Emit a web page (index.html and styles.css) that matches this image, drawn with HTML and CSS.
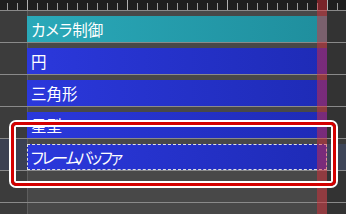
FILE: index.html
```html
<!DOCTYPE html>
<html lang="ja">
<head>
    <meta charset="UTF-8">
    <title>Timeline</title>
    <link rel="stylesheet" href="styles.css">
</head>
<body>
    <div class="timeline">
        <div class="ruler"></div>

        <div class="track">
            <div class="track-head"></div>
            <div class="track-lane"><div class="clip clip-camera">カメラ制御</div></div>
            <div class="track-tail"></div>
        </div>
        <div class="track">
            <div class="track-head"></div>
            <div class="track-lane"><div class="clip clip-object">円</div></div>
            <div class="track-tail"></div>
        </div>
        <div class="track">
            <div class="track-head"></div>
            <div class="track-lane"><div class="clip clip-object">三角形</div></div>
            <div class="track-tail"></div>
        </div>
        <div class="track">
            <div class="track-head"></div>
            <div class="track-lane"><div class="clip clip-object">星型</div></div>
            <div class="track-tail"></div>
        </div>
        <div class="track selected">
            <div class="track-head"></div>
            <div class="track-lane"><div class="clip clip-object clip-active">フレームバッファ</div></div>
            <div class="track-tail"></div>
        </div>
        <div class="track">
            <div class="track-head"></div>
            <div class="track-lane"></div>
            <div class="track-tail"></div>
        </div>
        <div class="track">
            <div class="track-head"></div>
            <div class="track-lane"></div>
            <div class="track-tail"></div>
        </div>

        <!-- overlays -->
        <div class="playhead"></div>
        <div class="selection-frame"></div>
    </div>
</body>
</html>
```

FILE: styles.css
```css
body { margin: 0; background: #3c3c3c; font-family: "Noto Sans CJK JP", "Noto Sans", sans-serif; }
.timeline { position: relative; width: 346px; height: 214px; overflow: hidden; background: #3c3c3c; }

.ruler {
    height: 10px;
    border-bottom: 1px solid #8a8a8a;
    background-color: #1e1e1e;
    background-image: linear-gradient(90deg, #b0b0b0 1px, transparent 1px), linear-gradient(90deg, #9a9a9a 1px, transparent 1px);
    background-size: 100px 10px, 10px 7px;
    background-position: 27px 0, 7px 3px;
    background-repeat: repeat-x;
}

.track { display: flex; height: 31px; border-bottom: 1px solid #8a8a8a; }
.track-head { width: 27px; background: #3c3c3c; }
.track-lane { flex: 1; padding-top: 5px; background: linear-gradient(90deg, #5e5e5e 1px, #484848 1px); }
.track-tail { width: 19px; background: #333; }
.track.selected .track-head { background: #3b4152; }
.track.selected .track-tail { background: linear-gradient(#3a3a3a 5px, #3e4558 5px); }

.clip { box-sizing: border-box; height: 26px; padding-left: 4px; line-height: 26px; font-size: 15.5px; font-feature-settings: "palt"; color: #fff; white-space: nowrap; }
.clip-camera { background: linear-gradient(90deg, #2aa9b9, #1f8e9d); }
.clip-object { background: linear-gradient(90deg, #2b38dc, #1e2bb6); }
.clip-active { border: 1px dashed #e0e0e0; padding-left: 3px; line-height: 24px; letter-spacing: -2.3px; }

.playhead { position: absolute; left: 317px; top: 0; width: 10px; height: 100%; background: rgba(225, 45, 55, 0.47); }

.selection-frame {
    position: absolute;
    left: 11px; top: 122px;
    width: 325px; height: 64px;
    box-sizing: border-box;
    border: 3px solid #d40000;
    border-radius: 5px;
    box-shadow: 0 0 0 2px #fff, inset 0 0 0 2px #fff;
}
```
